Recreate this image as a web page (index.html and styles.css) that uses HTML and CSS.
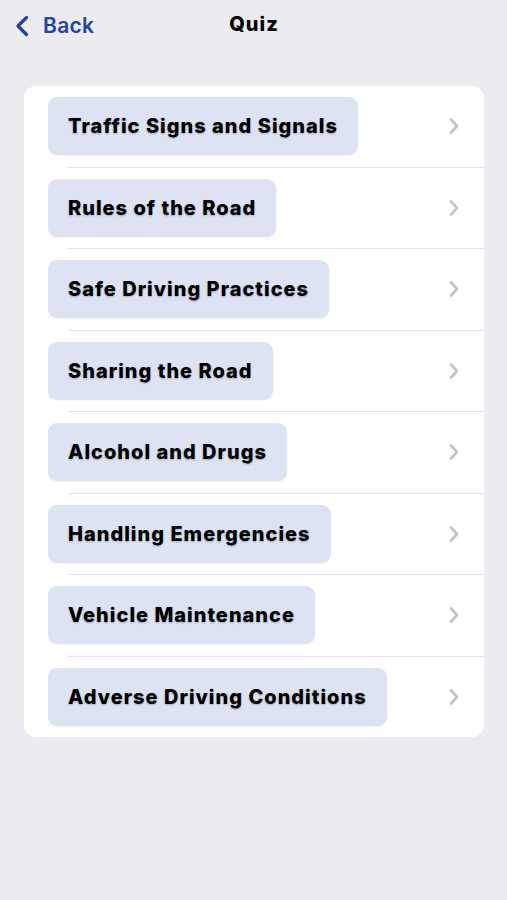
FILE: index.html
```html
<!DOCTYPE html>
<html lang="en">
<head>
<meta charset="utf-8">
<title>Quiz</title>
<link rel="stylesheet" href="styles.css">
</head>
<body>
<header class="nav">
  <a class="back" href="#">
    <svg class="back-icon" width="14" height="22" viewBox="0 0 14 22"><path d="M11.5 2.5 L3 11 L11.5 19.5" fill="none" stroke="currentColor" stroke-width="3.2" stroke-linecap="round" stroke-linejoin="round"/></svg>
    <span>Back</span>
  </a>
  <h1 class="title">Quiz</h1>
</header>
<main class="card">
  <div class="row"><span class="pill">Traffic Signs and Signals</span><svg class="chev" width="12" height="18" viewBox="0 0 12 18"><path d="M3 2.5 L9 9 L3 15.5" fill="none" stroke="currentColor" stroke-width="2.6" stroke-linecap="round" stroke-linejoin="round"/></svg></div>
  <div class="row"><span class="pill">Rules of the Road</span><svg class="chev" width="12" height="18" viewBox="0 0 12 18"><path d="M3 2.5 L9 9 L3 15.5" fill="none" stroke="currentColor" stroke-width="2.6" stroke-linecap="round" stroke-linejoin="round"/></svg></div>
  <div class="row"><span class="pill">Safe Driving Practices</span><svg class="chev" width="12" height="18" viewBox="0 0 12 18"><path d="M3 2.5 L9 9 L3 15.5" fill="none" stroke="currentColor" stroke-width="2.6" stroke-linecap="round" stroke-linejoin="round"/></svg></div>
  <div class="row"><span class="pill">Sharing the Road</span><svg class="chev" width="12" height="18" viewBox="0 0 12 18"><path d="M3 2.5 L9 9 L3 15.5" fill="none" stroke="currentColor" stroke-width="2.6" stroke-linecap="round" stroke-linejoin="round"/></svg></div>
  <div class="row"><span class="pill">Alcohol and Drugs</span><svg class="chev" width="12" height="18" viewBox="0 0 12 18"><path d="M3 2.5 L9 9 L3 15.5" fill="none" stroke="currentColor" stroke-width="2.6" stroke-linecap="round" stroke-linejoin="round"/></svg></div>
  <div class="row"><span class="pill">Handling Emergencies</span><svg class="chev" width="12" height="18" viewBox="0 0 12 18"><path d="M3 2.5 L9 9 L3 15.5" fill="none" stroke="currentColor" stroke-width="2.6" stroke-linecap="round" stroke-linejoin="round"/></svg></div>
  <div class="row"><span class="pill">Vehicle Maintenance</span><svg class="chev" width="12" height="18" viewBox="0 0 12 18"><path d="M3 2.5 L9 9 L3 15.5" fill="none" stroke="currentColor" stroke-width="2.6" stroke-linecap="round" stroke-linejoin="round"/></svg></div>
  <div class="row"><span class="pill">Adverse Driving Conditions</span><svg class="chev" width="12" height="18" viewBox="0 0 12 18"><path d="M3 2.5 L9 9 L3 15.5" fill="none" stroke="currentColor" stroke-width="2.6" stroke-linecap="round" stroke-linejoin="round"/></svg></div>
</main>
</body>
</html>
```
FILE: styles.css
```css
* { box-sizing: border-box; }
html, body { margin: 0; padding: 0; }
body {
  background: #ebebf0;
  font-family: Inter, "Noto Sans", "Liberation Sans", sans-serif;
  color: #000;
  height: 900px;
}
.nav {
  position: relative;
  height: 48px;
  display: flex;
  align-items: center;
  justify-content: center;
}
.back {
  position: absolute;
  left: 15px;
  top: 13px;
  display: flex;
  align-items: center;
  gap: 14px;
  color: #1f44a3;
  text-decoration: none;
  font-size: 21px;
  font-weight: 600;
  letter-spacing: 0.3px;
}
.back-icon { display: block; }
.title {
  margin: 0 0 0 1px;
  font-size: 20px;
  font-weight: 800;
  letter-spacing: 1px;
  line-height: 1;
}
.card {
  margin: 38px 23px 0 24px;
  background: #fff;
  border-radius: 12px;
  padding-left: 24px;
}
.row {
  display: flex;
  align-items: center;
  justify-content: space-between;
  padding: 11.25px 24px 11.25px 0;
  position: relative;
}
.row + .row { padding-top: 12.25px; }
.row + .row::before {
  content: "";
  position: absolute;
  top: 0;
  left: 20px;
  right: 0;
  height: 1px;
  background: #e4e4e8;
}
.pill {
  display: flex;
  align-items: center;
  height: 58px;
  padding: 0 20px;
  background: #dde3f3;
  border-radius: 9px;
  font-size: 20px;
  font-weight: 800;
  letter-spacing: 1px;
  text-shadow: 0 1px 2px rgba(0,0,0,0.25);
  box-shadow: 0 1px 2px rgba(0,0,0,0.05);
}
.chev { color: #c3c3c7; display: block; }
```
